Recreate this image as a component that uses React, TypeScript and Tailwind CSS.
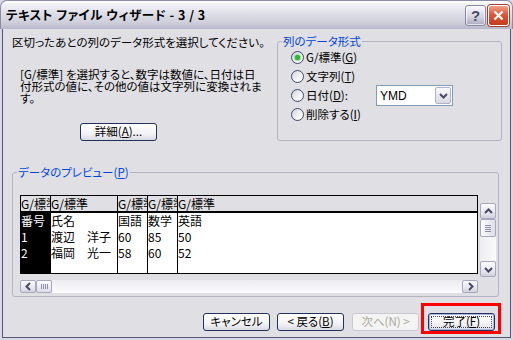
import clsx from 'clsx';
import type { ReactNode } from 'react';

const ui = "font-['Noto_Sans_CJK_JP',sans-serif] [font-feature-settings:'palt']";

const Mn = ({ c }: { c: string }) => <span className="underline underline-offset-[1px]">{c}</span>;

function Chevron({ dir }: { dir: 'up' | 'down' | 'left' | 'right' }) {
  const d = {
    up: 'M1 6 L4.5 2.5 L8 6',
    down: 'M1 3 L4.5 6.5 L8 3',
    left: 'M6 1 L2.5 4.5 L6 8',
    right: 'M3 1 L6.5 4.5 L3 8',
  }[dir];
  return (
    <svg width="9" height="9" viewBox="0 0 9 9">
      <path d={d} fill="none" stroke="#4a4866" strokeWidth="2" />
    </svg>
  );
}

function ScrollBtn({ dir, className }: { dir: 'up' | 'down' | 'left' | 'right'; className?: string }) {
  return (
    <div
      className={clsx(
        'flex shrink-0 items-center justify-center rounded-[2px] border border-[#a9a7be] bg-[linear-gradient(to_bottom,#fbfbfd,#e3e3ec_70%,#d0d0dc)]',
        className,
      )}
    >
      <Chevron dir={dir} />
    </div>
  );
}

function Radio({ checked }: { checked?: boolean }) {
  return (
    <span className="flex h-[13px] w-[13px] shrink-0 items-center justify-center rounded-full border border-[#3e4a6b] bg-[linear-gradient(135deg,#d3d3dc,#f4f4f7_60%,#ffffff)]">
      {checked && <span className="h-[5px] w-[5px] rounded-full bg-[#2fb52f] shadow-[0_0_1px_1px_#8ddc8d]" />}
    </span>
  );
}

function PushButton({
  children,
  className,
  disabled,
  focused,
}: {
  children: ReactNode;
  className?: string;
  disabled?: boolean;
  focused?: boolean;
}) {
  return (
    <button
      type="button"
      className={clsx(
        'relative flex h-[18px] items-center justify-center rounded-[3px] border text-[11.5px] leading-none',
        disabled
          ? 'border-[#c9c7d2] bg-[#f4f4f4] text-[#aca899]'
          : 'border-[#22325c] bg-[linear-gradient(to_bottom,#ffffff,#f3f3f6_60%,#dadae4)] text-black',
        focused && 'shadow-[inset_0_0_0_1px_#a7b6e4]',
        className,
      )}
    >
      {focused && <span className="absolute inset-[2px] border border-dotted border-[#444]" />}
      <span className="relative">{children}</span>
    </button>
  );
}

const columns = [
  { w: 'w-[30px] border-r', rows: ['番号', '1', '2'], selected: true },
  { w: 'w-[67px] border-r', rows: ['氏名', '渡辺　洋子', '福岡　光一'] },
  { w: 'w-[30px] border-r', rows: ['国語', '60', '58'] },
  { w: 'w-[30px] border-r', rows: ['数学', '85', '60'] },
  { w: 'flex-1', rows: ['英語', '50', '52'] },
];

function Preview() {
  return (
    <div className="flex pl-[7px] pr-[1px] pt-[16px] pb-[3px]">
      <div className="flex w-[458px] flex-col">
        <div className="flex h-[79px] border border-black bg-white font-['Noto_Sans_CJK_JP',sans-serif] text-[12px] leading-[16px]">
          {columns.map((col, i) => (
            <div key={i} className={clsx('flex flex-col overflow-hidden border-black', col.w)}>
              <div className="h-[17px] shrink-0 overflow-hidden whitespace-nowrap border-b-2 border-black bg-[#e0dfe3]">
                G/標準
              </div>
              <div className={clsx('flex-1 whitespace-nowrap', col.selected ? 'bg-black text-white' : 'text-black')}>
                {col.rows.map((r) => (
                  <div key={r} className="h-[16px]">
                    {r}
                  </div>
                ))}
              </div>
            </div>
          ))}
        </div>
        <div className="mt-[6px] flex h-[13px]">
          <ScrollBtn dir="left" className="w-[16px]" />
          <div className="flex w-[16px] items-center justify-center gap-[1px] rounded-[2px] border border-[#a9a7be] bg-[linear-gradient(to_bottom,#fbfbfd,#dedee8)]">
            <span className="h-[5px] w-px bg-[#8e8ca6]" />
            <span className="h-[5px] w-px bg-[#8e8ca6]" />
            <span className="h-[5px] w-px bg-[#8e8ca6]" />
            <span className="h-[5px] w-px bg-[#8e8ca6]" />
          </div>
          <div className="flex-1 bg-[linear-gradient(to_bottom,#ececf2,#fbfbfd)]" />
          <ScrollBtn dir="right" className="w-[16px]" />
        </div>
      </div>
      <div className="ml-[2px] mt-[8px] flex h-[74px] w-[16px] flex-col">
        <ScrollBtn dir="up" className="h-[16px]" />
        <div className="flex h-[18px] flex-col items-center justify-center gap-[1px] rounded-[2px] border border-[#a9a7be] bg-[linear-gradient(to_right,#fbfbfd,#dedee8)]">
          <span className="h-px w-[6px] bg-[#8e8ca6]" />
          <span className="h-px w-[6px] bg-[#8e8ca6]" />
          <span className="h-px w-[6px] bg-[#8e8ca6]" />
          <span className="h-px w-[6px] bg-[#8e8ca6]" />
        </div>
        <div className="flex-1 bg-[linear-gradient(to_right,#ececf2,#fbfbfd)]" />
        <ScrollBtn dir="down" className="h-[16px]" />
      </div>
    </div>
  );
}

export default function App() {
  return (
    <div className={clsx('flex h-[340px] w-[513px] flex-col bg-[#d8d8e4] text-black', ui)}>
      {/* title bar */}
      <div className="flex h-[29px] shrink-0 items-center rounded-t-[7px] border border-b-0 border-[#8c8ca6] bg-[linear-gradient(to_bottom,#ffffff_0%,#f2f2f6_12%,#dedee7_45%,#d0d0dc_75%,#b7b7ca_100%)] pl-[5px] pr-[3px]">
        <span className="text-[12.5px] font-bold tracking-[0.5px]">テキスト ファイル ウィザード - 3 / 3</span>
        <div className="ml-auto flex gap-[2px]">
          <div className="flex h-[21px] w-[21px] items-center justify-center rounded-[3px] border border-[#8a8aa4] bg-[linear-gradient(to_bottom,#fafafd,#d6d6e2_55%,#a9a9c0)] shadow-[inset_0_0_0_1px_#ffffffaa]">
            <span className="font-['Liberation_Sans',sans-serif] text-[15px] font-bold leading-none text-[#4a4a68]">?</span>
          </div>
          <div className="flex h-[21px] w-[21px] items-center justify-center rounded-[3px] border border-[#ffffff] bg-[linear-gradient(to_bottom,#f0a088,#dc5a3a_45%,#c23c1e)] shadow-[0_0_0_1px_#a04030]">
            <svg width="11" height="11" viewBox="0 0 11 11">
              <path d="M1.5 1.5 L9.5 9.5 M9.5 1.5 L1.5 9.5" stroke="#ffffff" strokeWidth="2.2" />
            </svg>
          </div>
        </div>
      </div>

      {/* frame + client */}
      <div className="flex-1 px-[2px] pb-[2px]">
        <div className="h-full border-x border-b border-[#56567a] bg-[#e0dfe3]">
          <div className="flex">
            <div className="w-[274px]">
              <p className="ml-[9px] mt-[7px] whitespace-nowrap text-[11.5px] leading-[13px]">
                区切ったあとの列のデータ形式を選択してください。
              </p>
              <p className="ml-[17px] mt-[19px] whitespace-nowrap text-[11.5px] leading-[12px]">
                [G/標準] を選択すると、数字は数値に、日付は日
                <br />
                付形式の値に、その他の値は文字列に変換されま
                <br />
                す。
              </p>
              <PushButton className="ml-[77px] mt-[19px] w-[77px]">
                詳細(<Mn c="A" />)...
              </PushButton>
            </div>

            <fieldset className="mt-[6px] w-[225px] rounded-[3px] border border-[#b5b2c2]">
              <legend className="ml-[4px] px-[1px] text-[11.5px] leading-[13px] text-[#0046d5]">列のデータ形式</legend>
              <div className="pb-[3px] text-[11.5px]">
                <div className="flex h-[19px] items-center gap-[2px] pl-[13px]">
                  <Radio checked />
                  <span>
                    G/標準(<Mn c="G" />)
                  </span>
                </div>
                <div className="flex h-[19px] items-center gap-[2px] pl-[13px]">
                  <Radio />
                  <span>
                    文字列(<Mn c="T" />)
                  </span>
                </div>
                <div className="flex h-[19px] items-center gap-[2px] pl-[13px]">
                  <Radio />
                  <span className="w-[68px]">
                    日付(<Mn c="D" />):
                  </span>
                  <div className="flex h-[21px] w-[77px] items-center border border-[#7f9db9] bg-white">
                    <span className="flex-1 pl-[3px] font-['Liberation_Sans',sans-serif] text-[12px]">YMD</span>
                    <div className="mr-px flex h-[17px] w-[16px] items-center justify-center rounded-[2px] border border-[#b3b1c6] bg-[linear-gradient(to_bottom,#fafafc,#d8d8e4)]">
                      <Chevron dir="down" />
                    </div>
                  </div>
                </div>
                <div className="flex h-[19px] items-center gap-[2px] pl-[13px]">
                  <Radio />
                  <span>
                    削除する(<Mn c="I" />)
                  </span>
                </div>
              </div>
            </fieldset>
          </div>

          <fieldset className="ml-[9px] mt-[24px] w-[487px] rounded-[3px] border border-[#b5b2c2]">
            <legend className="ml-[4px] px-[1px] text-[11.5px] leading-[14px] text-[#0046d5]">
              データのプレビュー(<Mn c="P" />)
            </legend>
            <Preview />
          </fieldset>

          <div className="mt-[16px] flex pl-[200px]">
            <PushButton className="w-[67px]">キャンセル</PushButton>
            <PushButton className="ml-[7px] w-[67px]">
              &lt; 戻る(<Mn c="B" />)
            </PushButton>
            <PushButton disabled className="ml-[8px] w-[67px]">
              次へ(N) &gt;
            </PushButton>
            <div className="relative ml-[9px]">
              <PushButton focused className="w-[67px]">
                完了(<Mn c="F" />)
              </PushButton>
              <span className="pointer-events-none absolute -left-[7px] -top-[10px] h-[31px] w-[80px] border-[3px] border-[#ff0000]" />
            </div>
          </div>
        </div>
      </div>
    </div>
  );
}
